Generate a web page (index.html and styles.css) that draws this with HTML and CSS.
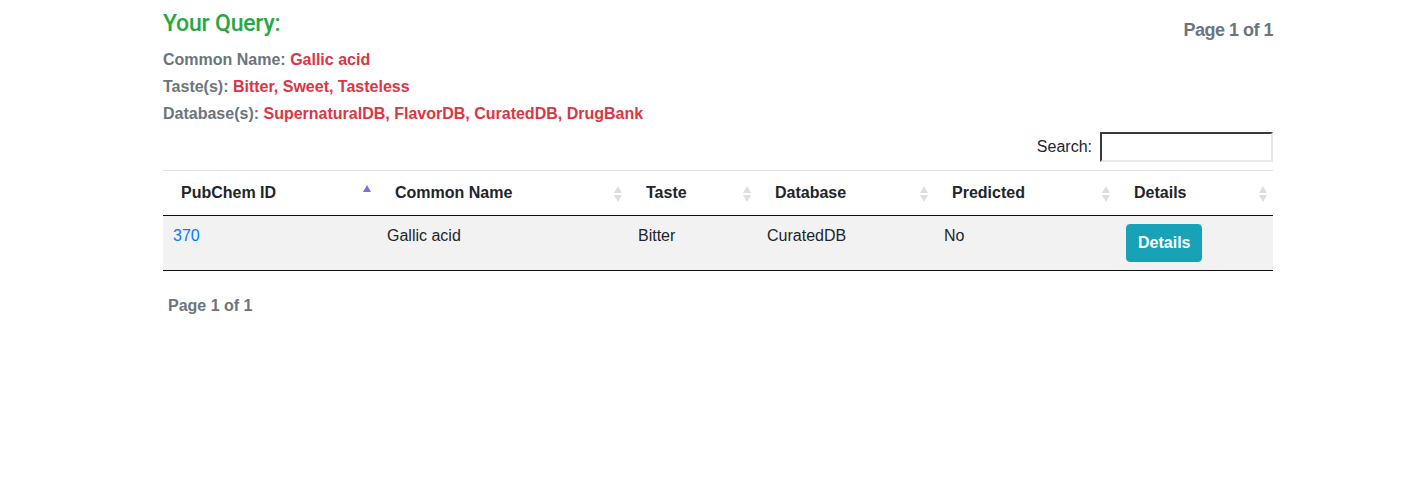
FILE: index.html
```html
<!DOCTYPE html>
<html lang="en">
<head>
    <meta charset="UTF-8">
    <meta name="viewport" content="width=device-width, initial-scale=1.0">
    <title>Search Results</title>
    <link rel="stylesheet" href="styles.css">
</head>
<body>

<div class="container">
    <div class="query-head">
        <div class="query">
            <h5 class="query-title">Your Query:</h5>
            <div class="query-line">Common Name: <span class="val">Gallic acid</span></div>
            <div class="query-line">Taste(s): <span class="val">Bitter, Sweet, Tasteless</span></div>
            <div class="query-line">Database(s): <span class="val">SupernaturalDB, FlavorDB, CuratedDB, DrugBank</span></div>
        </div>
        <div class="page-top">Page 1 of 1</div>
    </div>

    <div class="search-row">
        <label for="search">Search:</label>
        <input type="search" id="search">
    </div>

    <table class="results">
        <thead>
            <tr>
                <th class="c1 sort-asc">PubChem ID</th>
                <th class="c2 sortable">Common Name</th>
                <th class="c3 sortable">Taste</th>
                <th class="c4 sortable">Database</th>
                <th class="c5 sortable">Predicted</th>
                <th class="c6 sortable">Details</th>
            </tr>
        </thead>
        <tbody>
            <tr class="odd">
                <td><a href="#">370</a></td>
                <td>Gallic acid</td>
                <td>Bitter</td>
                <td>CuratedDB</td>
                <td>No</td>
                <td><button type="button" class="btn-details">Details</button></td>
            </tr>
        </tbody>
    </table>

    <div class="page-bottom">Page 1 of 1</div>
</div>

</body>
</html>
```

FILE: styles.css
```css
body { margin: 0; font-family: "Liberation Sans", Arial, sans-serif; font-size: 16px; color: #212529; }
.container { width: 1110px; margin-left: 163px; }

.query-head { display: flex; justify-content: space-between; align-items: flex-start; }
.query-title { margin: 12px 0 10px; font-family: Roboto, "Liberation Sans", sans-serif; font-size: 23px; font-weight: 500; line-height: 24px; color: #28a745; letter-spacing: -0.2px; }
.query-line { font-weight: bold; line-height: 27px; color: #6c757d; }
.query-line .val { color: #dc3545; }
.page-top { margin-top: 18px; font-size: 18px; font-weight: bold; line-height: 24px; color: #6c757d; letter-spacing: -0.5px; }

.search-row { display: flex; justify-content: flex-end; align-items: center; margin-top: 5px; }
.search-row label { margin-right: 8px; }
.search-row input { box-sizing: border-box; width: 173px; height: 30px; padding: 0 2px; margin: 0; font-size: 14px; border: 2px inset #e8e8e8; border-top-color: #8e8e8e; border-left-color: #8e8e8e; }

.results { width: 100%; margin-top: 8px; border-collapse: collapse; table-layout: fixed; }
.results th,
.results td { box-sizing: border-box; }
.results th { position: relative; padding: 10px 18px; text-align: left; font-weight: bold; line-height: 24px; border-top: 1px solid #dee2e6; border-bottom: 1px solid #111; }
.results td { padding: 8px 10px; line-height: 24px; vertical-align: top; border-bottom: 1px solid #111; }
.results tr.odd td { background: #f2f2f2; }
.results a { color: #007bff; text-decoration: none; }

.c1 { width: 214px; }
.c2 { width: 251px; }
.c3 { width: 129px; }
.c4 { width: 177px; }
.c5 { width: 182px; }
.c6 { width: 157px; }

.sort-asc::after,
.sortable::before,
.sortable::after { content: ""; position: absolute; right: 6px; width: 0; height: 0; border-left: 4px solid transparent; border-right: 4px solid transparent; }
.sort-asc::after { top: 14px; border-bottom: 7px solid #6f75dc; }
.sortable::before { top: 15px; border-bottom: 7px solid #dedede; }
.sortable::after { top: 24px; border-top: 7px solid #dedede; }

.btn-details { display: inline-block; height: 38px; padding: 0 11px; font-family: inherit; font-size: 16px; font-weight: bold; color: #fff; background: #17a2b8; border: 1px solid #17a2b8; border-radius: 4px; cursor: pointer; }

.page-bottom { margin-top: 23px; padding-left: 5px; font-weight: bold; color: #6c757d; line-height: 24px; }
```
